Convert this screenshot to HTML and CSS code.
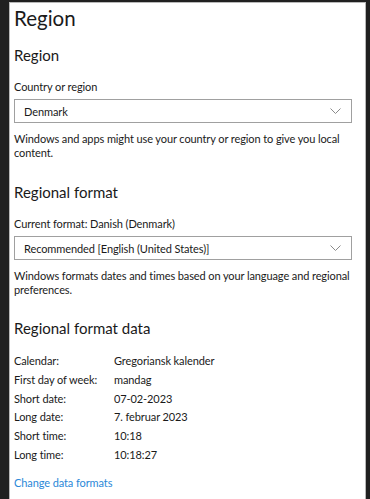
FILE: index.html
```html
<!DOCTYPE html>
<html lang="en">
<head>
    <meta charset="UTF-8">
    <meta name="viewport" content="width=device-width, initial-scale=1.0">
    <title>Region</title>
    <link rel="stylesheet" href="styles.css">
</head>
<body>
    <div class="window">
        <h1 class="page-title">Region</h1>

        <h2 class="section-title">Region</h2>
        <label class="field-label">Country or region</label>
        <div class="dropdown">
            <span>Denmark</span>
            <svg class="chevron" width="11" height="6" viewBox="0 0 11 6"><path d="M0.5 0.5 L5.5 5.5 L10.5 0.5" fill="none" stroke="#8a8a8a" stroke-width="1"/></svg>
        </div>
        <p class="note">Windows and apps might use your country or region to give you local content.</p>

        <h2 class="section-title format">Regional format</h2>
        <label class="field-label">Current format: Danish (Denmark)</label>
        <div class="dropdown">
            <span>Recommended [English (United States)]</span>
            <svg class="chevron" width="11" height="6" viewBox="0 0 11 6"><path d="M0.5 0.5 L5.5 5.5 L10.5 0.5" fill="none" stroke="#8a8a8a" stroke-width="1"/></svg>
        </div>
        <p class="note">Windows formats dates and times based on your language and regional preferences.</p>

        <h2 class="section-title format-data">Regional format data</h2>
        <div class="data">
            <div>Calendar:</div><div>Gregoriansk kalender</div>
            <div>First day of week:</div><div>mandag</div>
            <div>Short date:</div><div>07-02-2023</div>
            <div>Long date:</div><div>7. februar 2023</div>
            <div>Short time:</div><div>10:18</div>
            <div>Long time:</div><div>10:18:27</div>
        </div>
        <a class="link" href="#">Change data formats</a>
    </div>
</body>
</html>
```

FILE: styles.css
```css
html, body {
    margin: 0;
    height: 100%;
    overflow: hidden;
}
body {
    background-color: #202020;
    font-family: Lato, sans-serif;
    color: #1a1a1a;
    padding: 2px 4px 0 9px;
    box-sizing: border-box;
}
.window {
    background: white;
    border-left: 1px solid #b8b8b8;
    border-right: 1px solid #b8b8b8;
    border-top: 1px solid #b8b8b8;
    height: 100%;
    box-sizing: border-box;
    padding: 0 13px 0 4px;
}
.page-title {
    font-weight: normal;
    font-size: 20.5px;
    margin: 0;
    line-height: 30px;
}
.section-title {
    font-weight: normal;
    font-size: 15px;
    margin: 0;
    line-height: 20px;
}
.page-title + .section-title {
    margin-top: 12px;
}
.section-title.format {
    margin-top: 22px;
}
.section-title.format-data {
    margin-top: 21px;
}
.field-label {
    display: block;
    font-size: 11px;
    letter-spacing: -0.1px;
    line-height: 14px;
    margin-top: 15px;
}
.dropdown {
    margin-top: 5px;
    height: 24px;
    border: 1px solid #a0a0a0;
    box-sizing: border-box;
    display: flex;
    align-items: center;
    justify-content: space-between;
    padding: 0 10px 0 9px;
    font-size: 11px;
    letter-spacing: -0.1px;
}
.note {
    font-size: 11px;
    letter-spacing: -0.1px;
    line-height: 14px;
    margin: 9px 0 0;
}
.data {
    display: grid;
    grid-template-columns: 100px 1fr;
    font-size: 11px;
    letter-spacing: -0.1px;
    line-height: 18.8px;
    margin-top: 14px;
}
.link {
    display: block;
    margin-top: 11px;
    font-size: 11px;
    letter-spacing: -0.1px;
    color: #2b88d8;
    text-decoration: none;
}
```
